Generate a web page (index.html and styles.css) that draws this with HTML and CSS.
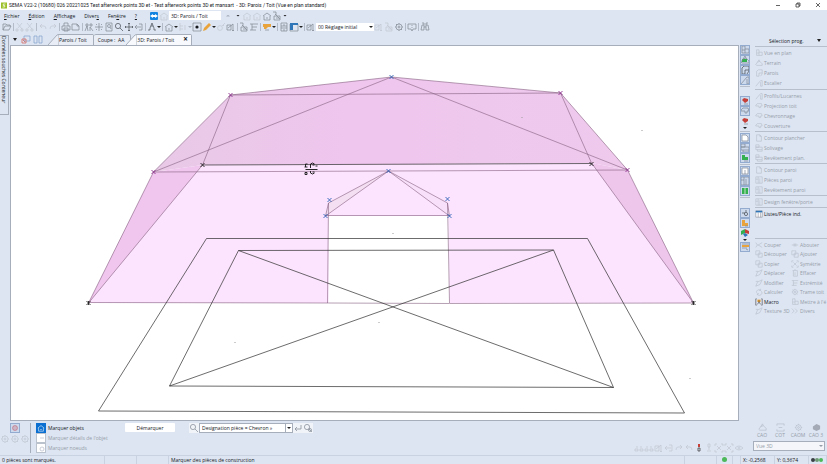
FILE: index.html
```html
<!DOCTYPE html>
<html lang="fr">
<head>
<meta charset="utf-8">
<title>SEMA V22-2</title>
<link rel="stylesheet" href="styles.css">
</head>
<body>
<svg class="sprite" aria-hidden="true">
  <symbol id="folder" viewBox="0 0 10 10"><path d="M1 8V2h3l1 1h3v1M1 8l2-4h6L7 8z"/></symbol>
  <symbol id="cut" viewBox="0 0 10 10"><path d="M2 1l5 6M7 1L3 6M1 7h2v2H1zM6 7h2v2H6z"/></symbol>
  <symbol id="undo" viewBox="0 0 10 10"><path d="M4 2L2 4l2 2M2 4h4q2 0 2 3"/></symbol>
  <symbol id="redo" viewBox="0 0 10 10"><path d="M6 2l2 2-2 2M8 4H4Q2 4 2 7"/></symbol>
  <symbol id="print" viewBox="0 0 10 10"><path d="M3 4V1h4v3M1 4h8v4H1zM3 6h4v3H3z"/></symbol>
  <symbol id="page" viewBox="0 0 10 10"><path d="M1 2h5l2 2v4H1zM6 2v2h2"/></symbol>
  <symbol id="doc" viewBox="0 0 10 10"><path d="M2 1h4l2 2v6H2zM6 1v2h2"/></symbol>
  <symbol id="people" viewBox="0 0 10 10"><path d="M1 9l2-5 1 5M6 9V5l3 4M2 2h2v2H2zM6 2h2v2H6z"/></symbol>
  <symbol id="sun" viewBox="0 0 10 10"><path d="M5 1v2M5 7v2M1 5h2M7 5h2M2 2l1 1M7 7l1 1M8 2L7 3M2 8l1-1M4 4h2v2H4z"/></symbol>
  <symbol id="pagefind" viewBox="0 0 10 10"><path d="M2 1h6v8H2z"/><circle cx="5" cy="4" r="1.5"/><path d="M6 5l1 2"/></symbol>
  <symbol id="find" viewBox="0 0 10 10"><circle cx="4" cy="4" r="2.6"/><path d="M6 6l3 3"/></symbol>
  <symbol id="move" viewBox="0 0 10 10"><path d="M5 1v8M1 5h8M4 2l1-1 1 1M4 8l1 1 1-1M2 4L1 5l1 1M8 4l1 1-1 1"/></symbol>
  <symbol id="orbit" viewBox="0 0 10 10"><path d="M1 5h6M3 3L1 5l2 2M5 2h3v6H5"/></symbol>
  <symbol id="tree" viewBox="0 0 10 10"><path d="M5 1L3 6M5 1l2 5M1 8h2V6M7 6v2h2M4 4h2"/></symbol>
  <symbol id="house" viewBox="0 0 10 10"><path d="M1 5l4-3 4 3M2 5v4h6V5M4 7h2"/></symbol>
  <symbol id="cell" viewBox="0 0 10 10"><path d="M2 1v8M2 4h3M2 7h3M7 3v5"/></symbol>
  <symbol id="target" viewBox="0 0 10 10"><path d="M1 1h8v8H1z"/><circle class="solid" cx="5" cy="5" r="1.6"/></symbol>
  <symbol id="pencil" viewBox="0 0 10 10"><path class="amber" d="M1 9l1-3 5-5 2 2-5 5z"/></symbol>
  <symbol id="key" viewBox="0 0 10 10"><circle cx="4" cy="6" r="2.4"/><path d="M6 4l3-3M7 3l1 1"/></symbol>
  <symbol id="dims" viewBox="0 0 10 10"><path d="M1 3h4v5H1zM2 6l5-4M7 2v7M6 8l1 1 1-1"/></symbol>
  <symbol id="stack" viewBox="0 0 10 10"><path d="M1 1h3v3M3 3l5 5M2 5h6v4H2zM4 7h3"/></symbol>
  <symbol id="flag" viewBox="0 0 10 10"><path class="amber" d="M1 2h8v3H6L4 7H2V5H1z"/><path d="M3 8h4"/></symbol>
  <symbol id="cabinet" viewBox="0 0 10 10"><path d="M2 1h6v8H2zM2 4h6M2 6h6M4 3h2M4 8h2"/></symbol>
  <symbol id="window" viewBox="0 0 10 10"><path d="M1 2h8v7H1z"/><path class="blue" d="M1 1h8v2H1zM1 3h3v5H1z"/></symbol>
  <symbol id="gear" viewBox="0 0 10 10"><circle cx="5" cy="5" r="3"/><circle cx="5" cy="5" r="1"/><path d="M5 1v1M5 8v1M1 5h1M8 5h1M2 2l1 1M7 7l1 1"/></symbol>
  <symbol id="bubble" viewBox="0 0 10 10"><path d="M1 2h8v5H6L5 9 4 7H1zM5 3v1M5 5v1"/></symbol>
  <symbol id="binoc" viewBox="0 0 10 10"><path d="M2 3h2v5H1zM6 3h2l1 5H6zM4 5h2M2 1h2v2M6 3V1h2"/></symbol>
  <symbol id="plan" viewBox="0 0 10 10"><path d="M2 1v7h7V4H5V1zM2 5h3M5 4v4"/></symbol>
  <symbol id="terrain" viewBox="0 0 10 10"><path d="M1 7l2-3 3-1 3 3v2H2zM3 4l2-3 1 2"/></symbol>
  <symbol id="walls" viewBox="0 0 10 10"><path d="M2 3l2-2h5v5L7 9M2 3v6h3V5h4"/></symbol>
  <symbol id="slope" viewBox="0 0 10 10"><path d="M1 9l6-7h2v7H7V4"/></symbol>
  <symbol id="roof" viewBox="0 0 10 10"><path d="M1 4l2-2h5l1 3H7v2H5V5H1z"/></symbol>
  <symbol id="panel" viewBox="0 0 10 10"><path d="M1 1h8v8H1zM4 1v8M6 3v6M1 4h3"/></symbol>
  <symbol id="layers" viewBox="0 0 10 10"><path d="M1 1h4v3H1zM1 4h8v3H1zM3 7v2h6V7"/></symbol>
  <symbol id="scissors" viewBox="0 0 10 10"><path d="M1 2l2 3-2 3M9 2L4 5l5 3M3 5h1"/></symbol>
  <symbol id="join" viewBox="0 0 10 10"><path d="M1 5h8M4 3v4M6 3v4"/></symbol>
  <symbol id="copy" viewBox="0 0 10 10"><path d="M1 1h5v5H1zM4 4h5v5H4z"/></symbol>
  <symbol id="shift" viewBox="0 0 10 10"><path d="M1 9l2-5 6-3-3 6zM1 3h3"/></symbol>
  <symbol id="trash" viewBox="0 0 10 10"><path d="M2 2h6M3 2v7h5V2M5 4v4M4 1h2"/></symbol>
  <symbol id="cycle" viewBox="0 0 10 10"><path d="M2 6a3 3 0 0 1 5-3M8 4a3 3 0 0 1-5 4M7 1v2H5M3 9V7h2"/></symbol>
  <symbol id="chevrons" viewBox="0 0 10 10"><path d="M1 2l3 3-3 3M5 2l3 3-3 3"/></symbol>
  <symbol id="lines" viewBox="0 0 10 10"><path d="M1 2h8M3 5h5M1 8h6M3 2v6"/></symbol>
  <symbol id="list" viewBox="0 0 10 10"><path fill="#fff" d="M1 1h8v8H1z"/><path d="M4 3v6M7 3v6"/><path class="blue" d="M1 1h8v2H1z"/></symbol>
  <symbol id="macro" viewBox="0 0 10 10"><path class="amber" d="M3 2h4v3H3z"/><path stroke="#333" d="M2 1H1v8h1M8 1h1v8H8M3 8l2-3 2 3M5 3v2"/></symbol>
  <symbol id="nodes" viewBox="0 0 10 10"><path d="M1 6h3v2H1zM6 6h3v2H6zM2 4h2M6 4h2"/></symbol>
  <symbol id="cube" viewBox="0 0 10 10"><path class="solid" d="M1 4l4-3 4 2v4L5 9 1 7z"/></symbol>
  <symbol id="enter" viewBox="0 0 10 10"><path d="M8 2v4H2M4 4L2 6l2 2"/></symbol>
  <symbol id="scan" viewBox="0 0 10 10"><path d="M1 3V1h2M7 1h2v2M9 7v2H7M3 9H1V7M3 3l4 4M7 3L3 7"/></symbol>
  <symbol id="frame" viewBox="0 0 10 10"><path d="M1 3V1h8v2M1 7v2h8V7M3 5h4"/></symbol>
  <symbol id="figure" viewBox="0 0 10 10"><path d="M4 1h2v3H4zM5 4v3M3 8h4"/></symbol>
  <symbol id="eye" viewBox="0 0 10 10"><path d="M1 5q4-4 8 0-4 4-8 0z"/><circle cx="5" cy="5" r="1"/></symbol>
</svg>

<div class="app">
  <header class="titlebar">
    <svg class="logo" viewBox="0 0 8 8"><path fill="#9bbf26" d="M0 0h8v8H0z"/><path fill="none" stroke="#fff" d="M6 2H3v2h2v2H2"/></svg>
    <h1>SEMA V22-2 (10680) 026 20221025 Test afterwork points 3D et - Test afterwork points 3D et mansart&nbsp; - 3D: Parois / Toit (Vue en plan standard)</h1>
    <div class="winctl">
      <button aria-label="Réduire"><svg viewBox="0 0 6 6"><path d="M1 3.500h4"/></svg></button>
      <button aria-label="Restaurer"><svg viewBox="0 0 6 6"><path d="M1 2h3v3H1zM2 2V1h3v3H4"/></svg></button>
      <button aria-label="Fermer"><svg viewBox="0 0 6 6"><path d="M1 1l4 4M5 1L1 5"/></svg></button>
    </div>
  </header>

  <nav class="menubar">
    <div class="menus">
      <button><u>F</u>ichier</button><button><u>É</u>dition</button><button><u>A</u>ffichage</button><button>Diver<u>s</u></button><button>Fen<u>ê</u>tre</button><button><u>?</u></button>
    </div>
    <svg class="remote" viewBox="0 0 8 8"><rect width="8" height="8" rx="1" fill="#1583e0"/><path fill="#fff" d="M0 4l3-2v1h2V2l3 2-3 2V5H3v1z"/></svg>
    <svg class="ic off"><use href="#house"/></svg>
    <input class="viewname" aria-label="Vue" value="3D: Parois / Toit">
    <div class="viewtools">
      <i class="caret up"></i><i class="caret"></i>
      <svg class="ic off"><use href="#house"/></svg><svg class="ic off"><use href="#house"/></svg><svg class="ic"><use href="#house"/></svg><svg class="ic"><use href="#stack"/></svg>
    </div>
    <i class="caret"></i>
  </nav>

  <div class="toolbar">
    <button><svg class="ic"><use href="#folder"/></svg></button><hr>
    <button><svg class="ic off"><use href="#cut"/></svg></button><button><svg class="ic off"><use href="#cut"/></svg></button><hr>
    <button><svg class="ic off"><use href="#undo"/></svg></button><button><svg class="ic off"><use href="#redo"/></svg></button><hr>
    <button><svg class="ic"><use href="#print"/></svg></button><button><svg class="ic"><use href="#page"/></svg></button><hr>
    <button><svg class="ic"><use href="#people"/></svg></button><button><svg class="ic"><use href="#sun"/></svg></button><button><svg class="ic"><use href="#pagefind"/></svg></button><button><svg class="ic dark"><use href="#find"/></svg></button><button><svg class="ic dark"><use href="#move"/></svg></button><button><svg class="ic"><use href="#orbit"/></svg></button><hr>
    <button><svg class="ic dark"><use href="#tree"/></svg></button><i class="caret"></i><hr>
    <button><svg class="ic"><use href="#house"/></svg></button><i class="caret"></i>
    <button><svg class="ic off"><use href="#cell"/></svg></button><i class="caret dim"></i>
    <button><svg class="ic"><use href="#target"/></svg></button>
    <button><svg class="ic flat"><use href="#pencil"/></svg></button><i class="caret"></i>
    <button><svg class="ic off"><use href="#key"/></svg></button><button><svg class="ic"><use href="#dims"/></svg></button><hr>
    <button><svg class="ic"><use href="#stack"/></svg></button><button><svg class="ic"><use href="#lines"/></svg></button><hr>
    <button><svg class="ic"><use href="#flag"/></svg></button><i class="caret"></i><hr>
    <button><svg class="ic"><use href="#cabinet"/></svg></button><button><svg class="ic"><use href="#window"/></svg></button><i class="caret"></i><hr>
    <button><svg class="ic"><use href="#dims"/></svg></button>
    <span class="pick preset"><select aria-label="Réglage"><option>00 Réglage initial</option></select></span>
    <button><svg class="ic off"><use href="#dims"/></svg></button><button><svg class="ic off"><use href="#stack"/></svg></button><button><svg class="ic"><use href="#gear"/></svg></button><hr>
    <button><svg class="ic"><use href="#bubble"/></svg></button><hr>
    <button><svg class="ic"><use href="#binoc"/></svg></button>
  </div>

  <main class="work">
    <aside class="drawer"><button>Données souches Conteneur</button></aside>

    <section class="editor">
      <div class="tabs">
        <i class="caret big"></i>
        <svg class="ic"><path stroke="#7f9fca" d="M3 1h6v5H3z"/><path stroke="#d65a50" d="M1 4h4v4H1zM2 5l2 2"/></svg>
        <svg class="ic"><path stroke="#7f9fca" d="M1 1h3v7H1zM6 1h3v7H6z"/></svg>
        <div class="tabset">
          <button class="tab slanted"><svg viewBox="0 0 11 11"><path d="M0 11L9 1q1-.5 2-.5V11"/></svg><span>Parois / Toit</span></button>
          <button class="tab"><span>Coupe :&nbsp; AA</span></button>
          <button class="tab slanted active"><svg viewBox="0 0 11 11"><path d="M0 11L9 1q1-.5 2-.5V11"/></svg><span>3D: Parois / Toit</span><b>×</b></button>
        </div>
      </div>
      <div class="canvas">
        <svg viewBox="11 46 726 374" preserveAspectRatio="xMidYMid meet">
          <defs>
            <linearGradient id="deck"><stop offset="0" stop-color="#e8c9e6"/><stop offset=".4" stop-color="#efc6ee"/><stop offset="1" stop-color="#efcaed"/></linearGradient>
            <g id="x"><path d="M-2-2l4 4M2-2l-4 4"/></g>
          </defs>
          <g stroke="none">
            <path fill="#fce4fe" d="M202 165L591 163 693 303H88z"/>
            <path fill="#fce4fe" d="M153 172h474L693 303H88z"/>
            <path fill="url(#deck)" d="M153 172L230 95 391 77 560 93 627 170 591 163 202 165z"/>
            <path fill="#f0c6ee" d="M153 172L202 165 88 303z"/>
            <path fill="#eec6ec" d="M627 170L591 163 693 303z"/>
            <path fill="#fff" d="M328 216H448L449 303H328z"/>
            <path fill="#f4def2" d="M388 171L328 203 325 216z"/>
            <path fill="#f8e0fa" d="M388 171L447 203 449 216z"/>
          </g>
          <g class="edge">
            <path d="M88 303L153 172 230 95 391 77 560 93 627 170 693 303"/>
            <path d="M230 95L560 93M230 95L202 165M560 93L591 163M153 172L391 77 627 170M153 172L627 170M202 165L88 303M591 163L693 303M388 171L328 203 325 216zM388 171L447 203 449 216zM328 203L327 303M447 203L449 303M325 215.500H449"/>
            <path d="M88 302.500L328 303 449 303.500 693 303"/>
          </g>
          <path class="base" d="M202 165L591 163.500M206 238.500H587L684 413 98 411zM238 250.500L553 250 613 387.500 169 386zM238 250.500L613 387.500M553 250L169 386"/>
          <g class="mark plum"><use href="#x" x="230" y="95"/><use href="#x" x="560" y="93"/><use href="#x" x="153" y="172"/><use href="#x" x="627" y="170"/></g>
          <g class="mark ink"><use href="#x" x="202" y="165"/><use href="#x" x="591" y="164"/><use href="#x" x="88" y="303"/><use href="#x" x="693" y="303"/><path d="M88 301v4M693 301v4"/></g>
          <g class="mark azure"><use href="#x" x="391" y="77"/><use href="#x" x="388" y="171"/><use href="#x" x="329" y="200"/><use href="#x" x="447" y="199"/><use href="#x" x="325" y="216"/><use href="#x" x="449" y="216"/></g>
          <path class="cursor" d="M305 169.500h12M307 164h-2v3M304 167h3M310 168v-4q2-2 4 0M312 165h2M315 166h2M304.500 172.500h2v2h-2zM310 171v2q2 2 4 0M312 172h2"/>
          <path fill="#999" d="M392 233h1v1h-1zM641 130h1v1h-1zM521 117h1v1h-1zM689 378h1v1h-1zM378 322h1v1h-1zM234 342h1v1h-1z"/>
        </svg>
      </div>
    </section>

    <div class="rail">
      <div class="set">
        <button class="on"><svg class="ic"><use href="#plan"/></svg></button>
        <button class="on"><svg class="ic"><path class="green" d="M2 4h5v3H2z"/><use href="#terrain"/></svg></button>
        <button class="on"><svg class="ic dark"><use href="#walls"/></svg></button>
        <button class="on"><svg class="ic"><use href="#slope"/></svg></button>
      </div>
      <div class="set roofs">
        <button class="on"><svg class="ic"><path class="red" d="M2 4l2-2 4 1v2L5 7z"/><path d="M4 8h4"/></svg></button>
        <button class="on"><svg class="ic"><use href="#roof"/></svg></button>
        <button><svg class="ic"><path class="red" d="M2 4l2-2 4 1v2L5 7z"/><path d="M4 8h4"/></svg></button>
        <i class="caret"></i>
      </div>
      <div class="set">
        <button class="on"><svg class="ic"><path fill="#fff" d="M2 2h4l2 2v4H2z"/></svg></button>
        <button class="on"><svg class="ic"><use href="#layers"/></svg></button>
        <button class="on"><svg class="ic"><path class="green" d="M2 2h3v2h3v3H2z"/><path d="M4 8h4"/></svg></button>
      </div>
      <div class="set">
        <button class="on"><svg class="ic"><path fill="#fff" d="M2 2h6v6H2z"/><path d="M5 4v4"/></svg></button>
        <button class="on"><svg class="ic"><use href="#panel"/></svg></button>
        <button class="on"><svg class="ic"><path class="green" d="M2 2h6v6H2z"/><path stroke="#fff" d="M5 2v6"/></svg></button>
      </div>
      <div class="set views">
        <button class="on"><svg class="ic dark"><path d="M2 5h3"/><circle cx="6" cy="6" r="1.6"/><path d="M6 2v2"/></svg></button>
        <button class="on"><svg class="ic"><path class="amber" d="M2 2h3v3h3v3H2z"/><path d="M5 8h3"/></svg></button>
        <button><svg class="ic"><path class="green" d="M1 3l4-2v4l-4 2z"/><path class="red" d="M5 1l4 2v3L5 5z"/><path class="blue" d="M3 6l2-1 3 2-3 2z"/></svg></button>
        <i class="caret"></i>
        <button class="on"><svg class="ic"><path class="amber" d="M2 3h7v2H2z"/><path d="M2 2h7M2 6h5M6 7l2 1"/></svg></button>
      </div>
    </div>

    <aside class="side">
      <h2>Sélection prog.<i class="caret big"></i></h2>
      <div class="group">
        <button disabled><svg class="ic"><use href="#plan"/></svg>Vue en plan</button>
        <button disabled><svg class="ic"><use href="#terrain"/></svg>Terrain</button>
        <button disabled><svg class="ic"><use href="#walls"/></svg>Parois</button>
        <button disabled><svg class="ic"><use href="#slope"/></svg>Escalier</button>
      </div>
      <div class="group">
        <button disabled><svg class="ic"><use href="#slope"/></svg>Profils/Lucarnes</button>
        <button disabled><svg class="ic"><use href="#roof"/></svg>Projection toit</button>
        <button disabled><svg class="ic"><use href="#roof"/></svg>Chevronnage</button>
        <button disabled><svg class="ic"><use href="#roof"/></svg>Couverture</button>
      </div>
      <div class="group">
        <button disabled><svg class="ic"><use href="#doc"/></svg>Contour plancher</button>
        <button disabled><svg class="ic"><use href="#layers"/></svg>Solivage</button>
        <button disabled><svg class="ic"><use href="#layers"/></svg>Revêtement plan.</button>
      </div>
      <div class="group">
        <button disabled><svg class="ic"><use href="#doc"/></svg>Contour paroi</button>
        <button disabled><svg class="ic"><use href="#panel"/></svg>Pièces paroi</button>
        <button disabled><svg class="ic"><use href="#panel"/></svg>Revêtement paroi</button>
      </div>
      <div class="group"><button disabled><svg class="ic"><use href="#panel"/></svg>Design fenêtre/porte</button></div>
      <div class="group"><button><svg class="ic"><use href="#list"/></svg>Listes/Pièce ind.</button></div>
      <div class="group edit">
        <button disabled><svg class="ic"><use href="#scissors"/></svg>Couper</button><button disabled><svg class="ic"><use href="#join"/></svg>Abouter</button>
        <button disabled><svg class="ic"><use href="#copy"/></svg>Découper</button><button disabled><svg class="ic"><use href="#copy"/></svg>Ajouter</button>
        <button disabled><svg class="ic"><use href="#copy"/></svg>Copier</button><button disabled><svg class="ic"><use href="#scan"/></svg>Symétrie</button>
        <button disabled><svg class="ic"><use href="#shift"/></svg>Déplacer</button><button disabled><svg class="ic"><use href="#trash"/></svg>Effacer</button>
        <button disabled><svg class="ic"><use href="#shift"/></svg>Modifier</button><button disabled><svg class="ic"><use href="#lines"/></svg>Extrémité</button>
        <button disabled><svg class="ic"><use href="#cycle"/></svg>Calculer</button><button disabled><svg class="ic"><use href="#gear"/></svg>Trame toit</button>
        <button><svg class="ic"><use href="#macro"/></svg>Macro</button><button disabled><svg class="ic"><use href="#plan"/></svg>Mettre à l'é</button>
        <button disabled><svg class="ic"><use href="#shift"/></svg>Texture 3D</button><button disabled><svg class="ic"><use href="#chevrons"/></svg>Divers</button>
      </div>
    </aside>
  </main>

  <section class="dock">
    <div class="modes">
      <button class="on"><svg class="ic"><g stroke="#c3707c"><circle cx="5" cy="5" r="2.500"/><path d="M3 4h4M3 6h4"/></g></svg></button>
      <div><svg class="ic off"><use href="#gear"/></svg><svg class="ic off"><use href="#gear"/></svg><svg class="ic off"><use href="#gear"/></svg></div>
    </div>
    <div class="marks">
      <button class="live"><span><svg class="ic"><use href="#house"/></svg></span>Marquer objets</button>
      <button disabled><span><svg class="ic"><path d="M3 4h4"/></svg></span>Marquer détails de l'objet</button>
      <button disabled><span><svg class="ic"><circle cx="5" cy="5" r="2"/></svg></span>Marquer noeuds</button>
    </div>
    <button class="push">Démarquer</button>
    <div class="filter">
      <button><svg class="ic"><use href="#find"/></svg></button>
      <span class="pick boxed"><select aria-label="Filtre"><option>Designation pièce = Chevron »</option></select></span>
      <button><svg class="ic"><use href="#enter"/></svg></button>
      <button><svg class="ic"><use href="#find"/><circle cx="7" cy="7" r="1.500"/></svg></button>
    </div>
    <div class="snaps">
      <svg class="ic off"><use href="#nodes"/></svg><svg class="ic off"><use href="#nodes"/></svg><svg class="ic off"><use href="#dims"/></svg><svg class="ic off"><use href="#orbit"/></svg><svg class="ic off"><use href="#redo"/></svg><svg class="ic off"><use href="#undo"/></svg><svg class="ic"><path class="red" d="M4 1h2v3H4z"/><path stroke="#333" d="M4 5h2v3H4z"/></svg><svg class="ic off"><use href="#figure"/></svg><svg class="ic off"><use href="#scan"/></svg><svg class="ic off"><use href="#scan"/></svg><svg class="ic off"><use href="#eye"/></svg>
    </div>
    <div class="cad">
      <div>
        <button disabled><svg class="ic"><use href="#terrain"/></svg>CAO</button><button disabled><svg class="ic"><use href="#frame"/></svg>COT</button><button disabled><svg class="ic"><use href="#gear"/></svg>CAOM</button><button disabled><svg class="ic"><use href="#cube"/></svg>CAO 3</button>
      </div>
      <span class="pick boxed muted"><select aria-label="Type de vue" disabled><option>Vue 3D</option></select></span>
    </div>
  </section>

  <footer class="status">
    <span class="count">0 pièces sont marqués.</span><span class="slot"></span><span class="slot"></span>
    <span class="hint">Marquer des pièces de construction</span><span class="slot"></span>
    <span class="lamp"><i class="dot"></i></span><span class="gap"></span>
    <span class="coord">X: -0,2568</span><span class="coord">Y: 0,3674</span>
    <span class="lights"><i class="dot dk"></i><i class="dot md"></i><i class="dot"></i></span>
  </footer>
</div>
</body>
</html>
```
FILE: styles.css
```css
:root {
  --bg: #dde5f2;
  --line: #a6aebb;
  --text: #14171c;
  --dim: #959da9;
}
* { box-sizing: border-box; }
body {
  margin: 0;
  background: var(--bg);
  color: var(--text);
  font: 5px/8px "Open Sans", "Noto Sans", sans-serif;
}
button, select, input {
  margin: 0;
  padding: 0;
  border: 0;
  background: none;
  color: inherit;
  font: inherit;
  white-space: nowrap;
}
button:disabled, select:disabled { color: var(--dim); opacity: 1; }
h1, h2 { margin: 0; font: inherit; }
i, b { font-style: normal; }
.sprite { position: absolute; width: 0; height: 0; }

.app { display: flex; flex-direction: column; height: 100vh; overflow: hidden; }

/* icons */
.ic {
  display: block;
  flex: none;
  width: 10px;
  height: 10px;
  fill: none;
  stroke: #7f8792;
  stroke-width: 0.7;
}
.ic.dark { stroke: #454a52; }
.ic.off { stroke: #c0c7d3; }
.ic.flat { stroke: none; }
.solid { fill: currentColor; stroke: none; }
.amber { fill: #e8a33c; stroke: none; }
.blue { fill: #2f76b8; stroke: none; }
.green { fill: #35b050; stroke: none; }
.red { fill: #c6403a; stroke: none; }
button:disabled .ic { stroke: #b4bbc7; color: #a4abb6; }
.caret {
  flex: none;
  width: 4px;
  height: 2px;
  background: #222;
  clip-path: polygon(0 0, 100% 0, 50% 100%);
}
.caret.up { background: #aab2c0; clip-path: polygon(0 100%, 100% 100%, 50% 0); }
.caret.dim { background: #aab2c0; }
.caret.big { height: 3px; }

/* title bar */
.titlebar {
  display: flex;
  align-items: center;
  flex: none;
  height: 10px;
  padding: 0 6px 0 1px;
  gap: 2px;
  background: #fff;
}
.logo { width: 6px; height: 7px; }
.titlebar h1 { flex: 1; font-family: Roboto, "Open Sans", sans-serif; white-space: nowrap; }
.winctl { display: flex; gap: 14px; }
.winctl button { width: 6px; height: 6px; }
.winctl svg { display: block; fill: none; stroke: #222; stroke-width: 0.7; }

/* menus */
.menubar { display: flex; align-items: center; flex: none; height: 11px; padding-left: 4px; }
.menus { display: flex; gap: 9px; width: 146px; }
.remote { width: 8px; height: 8px; margin-right: 1px; }
.viewname { width: 52px; height: 9px; margin-right: 5px; padding-left: 2px; background: #fff; }
.viewtools { display: flex; align-items: center; width: 57px; }
.viewtools .caret { margin-right: 6px; }
.viewtools .caret + .ic { margin-left: -4px; }

.toolbar { display: flex; align-items: center; flex: none; height: 12px; padding-left: 2px; }
.toolbar hr { width: 1px; height: 8px; margin: 0 1px; border: 0; background: #b3bbc9; }
.toolbar button { width: 10px; }

.pick { display: flex; align-items: center; background: #fff; }
.pick select { flex: 1; min-width: 0; height: 8px; padding-left: 2px; appearance: none; }
.pick::after {
  content: "";
  width: 4px;
  height: 2px;
  margin: 0 1px;
  background: #222;
  clip-path: polygon(0 0, 100% 0, 50% 100%);
}
.pick.boxed { border: 1px solid var(--line); }
.pick.boxed select { border-right: 1px solid var(--line); }
.pick.muted { background: #f4f6f9; }
.pick.muted select { border-right: 0; }
.pick.muted::after { background: var(--dim); }
.preset { width: 58px; }

/* working area */
.work { display: flex; flex: 1; min-height: 0; padding-top: 1px; }
.drawer { flex: none; width: 10px; padding-top: 1px; }
.drawer button {
  width: 9px;
  height: 80px;
  border: 1px solid var(--line);
  border-left: 0;
  text-align: left;
  line-height: 8px;
  writing-mode: vertical-rl;
}
.editor { display: flex; flex: 1; flex-direction: column; min-width: 0; }
.tabs { display: flex; align-items: center; flex: none; height: 11px; padding-left: 3px; }
.tabs > .caret { margin-right: 4px; }
.tabs > .ic { margin-right: 2px; }
.tabset { display: flex; align-self: stretch; margin-left: 3px; }
.tab {
  display: flex;
  align-items: center;
  height: 11px;
  padding: 0 6px 0 4px;
  border: 1px solid var(--line);
  border-width: 1px 1px 0 0;
  border-radius: 2px 2px 0 0;
  background: #e9eef6;
}
.tab.slanted { padding: 0; border-width: 0 1px 0 0; background: none; }
.tab.slanted svg { flex: none; width: 11px; height: 11px; fill: #e9eef6; stroke: var(--line); }
.tab.slanted span {
  height: 11px;
  padding: 1px 6px 0 0;
  border-top: 1px solid var(--line);
  background: #e9eef6;
}
.tab.active { margin-left: -5px; }
.tab.active svg { fill: #f7f9fc; }
.tab.active span, .tab.active b {
  height: 11px;
  padding-right: 9px;
  border-top: 1px solid var(--line);
  background: #f7f9fc;
}
.tab.active b { padding-right: 3px; font-size: 8px; }
.canvas {
  flex: 1;
  min-height: 0;
  border: 1px solid var(--line);
  background: #fff;
}
.canvas svg { display: block; width: 100%; height: 100%; }
.edge { fill: none; stroke: #84607f; stroke-width: 0.6; }
.base { fill: none; stroke: #2c2c2c; stroke-width: 0.7; }
.mark { fill: none; stroke-width: 0.9; }
.plum { stroke: #8d2f8d; }
.ink { stroke: #222; }
.azure { stroke: #2f62b5; }
.cursor { fill: none; stroke: #111; stroke-width: 0.9; }

/* layer toggles */
.rail { flex: none; width: 16px; padding: 11px 0 0 1px; }
.set { width: 10px; padding-bottom: 1px; border-bottom: 1px solid #b7bfcc; }
.set + .set { padding-top: 1px; }
.rail button { display: block; width: 10px; height: 10px; }
.rail .on, .modes .on { background: #cddaee; outline: 1px solid #94abd0; outline-offset: -1px; }
.rail .caret { display: block; height: 2px; margin: 1px 3px; }
.set + .roofs { padding-top: 9px; }
.set + .views { padding-top: 10px; border: 0; }

/* command panel */
.side { flex: none; width: 72px; overflow: hidden; }
.side h2 {
  display: flex;
  align-items: center;
  justify-content: space-between;
  height: 12px;
  padding: 1px 6px 0 14px;
}
.group { display: grid; padding: 1px 0; border-top: 1px solid #b7bfcc; }
.group + .group { padding-bottom: 0; }
.group button { display: flex; align-items: center; gap: 1px; height: 10px; text-align: left; }
.group .ic { width: 8px; height: 8px; }
.group.edit { grid-template-columns: 36px 1fr; height: 78px; margin-top: 19px; }
.edit button { height: auto; }

/* lower dock */
.dock { display: flex; flex: none; align-items: flex-start; height: 34px; padding: 2px 2px 0 0; }
.modes { width: 31px; height: 30px; border-right: 1px solid var(--line); }
.modes button { display: block; margin: 0 auto 1px; }
.modes div { display: flex; }
.marks { width: 89px; margin-left: 5px; }
.marks button { display: flex; align-items: center; gap: 2px; height: 10px; }
.marks span { border: 1px solid #bac2ce; background: #fff; }
.marks span .ic { width: 8px; height: 8px; }
.marks .live span { border-color: #0a6fd0; background: #0a6fd0; }
.marks .live .ic { stroke: #fff; }
.push { width: 50px; height: 9px; border-radius: 1px; background: #fff; }
.filter { display: flex; align-items: center; margin-left: 14px; }
.filter button { width: 10px; height: 10px; background: #f0f3f8; }
.filter .boxed { width: 94px; height: 10px; }
.snaps { display: flex; align-self: flex-end; margin: 0 9px 2px auto; }
.cad { width: 72px; }
.cad div { display: grid; grid-template-columns: repeat(4, 1fr); margin-bottom: 2px; }
.cad button { text-align: center; line-height: 7px; }
.cad .ic { width: 9px; height: 9px; margin: 0 auto; }
.cad .boxed { height: 10px; }

.status { display: flex; flex: none; height: 9px; line-height: 8px; white-space: nowrap; }
.status > span { border-right: 1px solid #c9d2e1; border-top: 1px solid #c9d2e1; padding-left: 2px; }
.status .count { width: 105px; }
.status .slot { width: 32px; }
.status .hint { flex: 1; }
.status .lamp { width: 16px; padding: 1px 5px; }
.status .gap { width: 8px; }
.status .coord { width: 34px; }
.dot { display: block; width: 5px; height: 5px; border-radius: 50%; background: #4cb85a; }
.status .lights { display: flex; align-items: center; width: 18px; }
.lights .dot { width: 4px; height: 4px; }
.dot.dk { background: #3a3f45; }
.dot.md { background: #6f9a78; }
```
